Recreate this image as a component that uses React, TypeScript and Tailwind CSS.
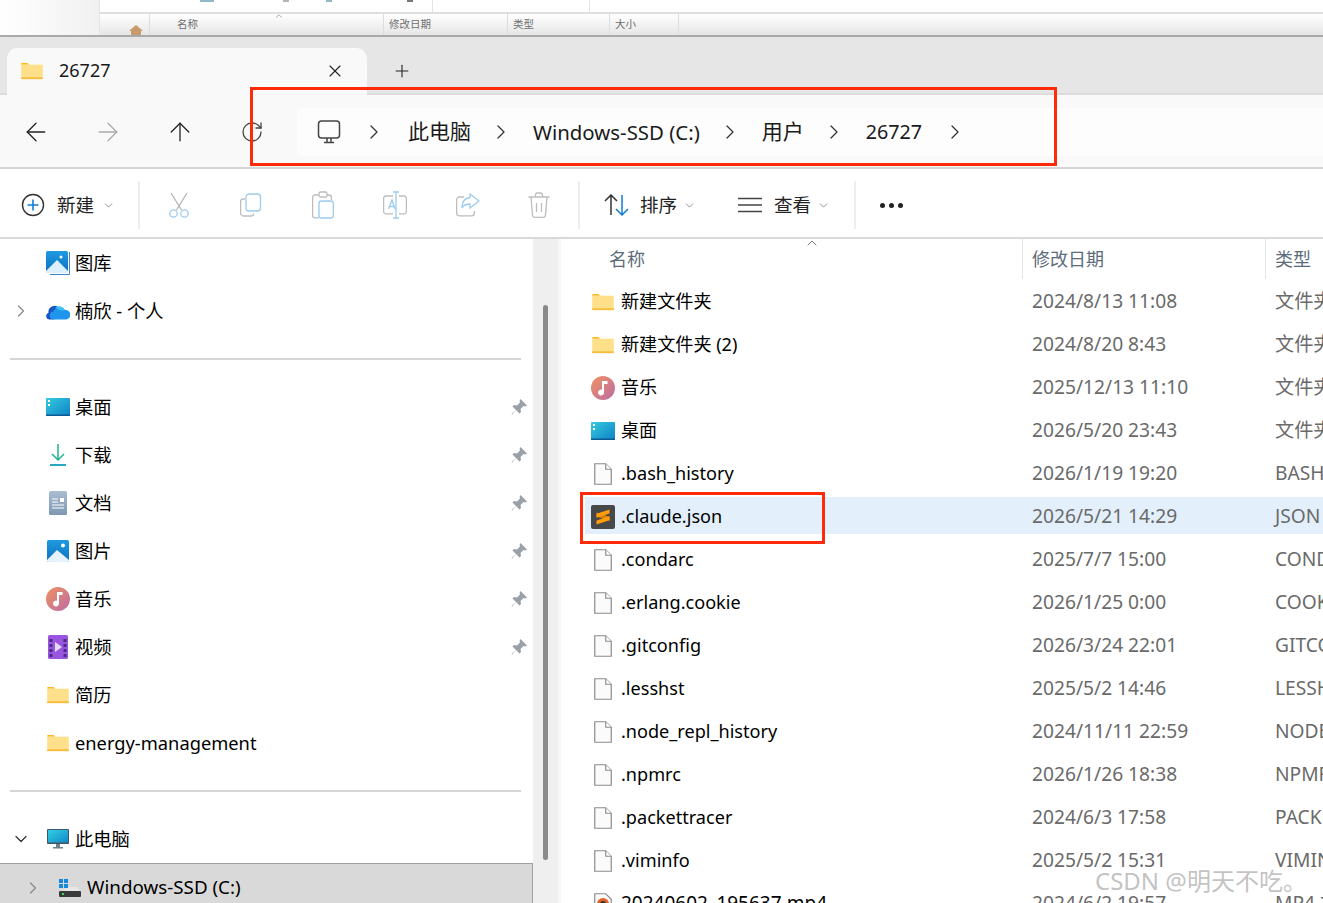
import React from 'react';
import { Plus, X, ChevronRight, ChevronDown, ChevronUp, ArrowLeft, ArrowRight, ArrowUp, RotateCw } from 'lucide-react';

const font = "font-['Noto_Sans','Noto_Sans_CJK_SC',sans-serif]";

function FolderIcon({ className = 'w-[22px] h-[18px]' }: { className?: string }) {
  return (
    <svg viewBox="0 0 24 20" className={className}>
      <path d="M0 2a1 1 0 0 1 1-1h6l2 2h-9z" fill="#fbb81c" />
      <rect x="0" y="3" width="24" height="16" fill="#ffe08a" />
      <rect x="0" y="17" width="24" height="2" fill="#f6bd3a" />
    </svg>
  );
}

function MusicIcon() {
  return (
    <svg viewBox="0 0 24 24" className="w-[24px] h-[24px]">
      <defs>
        <linearGradient id="mus" x1="0" y1="0" x2="1" y2="1">
          <stop offset="0" stopColor="#f09360" />
          <stop offset="1" stopColor="#bc6ba6" />
        </linearGradient>
      </defs>
      <circle cx="12" cy="12" r="12" fill="url(#mus)" />
      <path d="M11 5h5.500v3H13v8.500a3 3 0 1 1-2-2.800z" fill="#fff" />
    </svg>
  );
}

function DesktopIcon() {
  return (
    <svg viewBox="0 0 24 18" className="w-[24px] h-[18px]">
      <defs>
        <linearGradient id="dsk" x1="0" y1="0" x2="1" y2="1">
          <stop offset="0" stopColor="#34cde0" />
          <stop offset="1" stopColor="#0f7fc4" />
        </linearGradient>
      </defs>
      <rect width="24" height="18" rx="1" fill="url(#dsk)" />
      <rect y="16.500" width="24" height="1.500" fill="#0b5a94" />
      <rect x="2" y="2" width="2" height="2" fill="#fff" />
      <rect x="2" y="6" width="2" height="2" fill="#fff" />
    </svg>
  );
}

function FileIcon() {
  return (
    <svg viewBox="0 0 18 22" className="w-[18px] h-[22px]">
      <path d="M.75.75h11l5.500 5.500v15H.75z" fill="#fbfbfb" stroke="#8c8c8c" strokeWidth="1.200" />
      <path d="M11.750.75v5.500h5.500" fill="#fff" stroke="#8c8c8c" strokeWidth="1.200" />
    </svg>
  );
}

function SublimeIcon() {
  return (
    <svg viewBox="0 0 24 24" className="w-[24px] h-[24px]">
      <rect width="24" height="24" rx="2" fill="#47484a" />
      <path d="M5.500 11.500l13 4.200v-4l-13-4.200z" fill="#d98208" />
      <path d="M18.500 4.500 5.500 8.800v4l13-4.300z" fill="#ff9d0a" />
      <path d="M18.500 15.200 5.500 19.500v-4l13-4.200z" fill="#ff9d0a" />
    </svg>
  );
}

function Mp4Icon() {
  return (
    <svg viewBox="0 0 18 22" className="w-[18px] h-[22px]">
      <path d="M.75.75h11l5.500 5.500v15H.75z" fill="#fbfbfb" stroke="#8c8c8c" strokeWidth="1.200" />
      <circle cx="9" cy="11" r="6" fill="#e2622a" />
      <circle cx="9" cy="11" r="3" fill="#333" />
    </svg>
  );
}

function GalleryIcon() {
  return (
    <svg viewBox="0 0 24 24" className="w-[24px] h-[24px]">
      <defs>
        <linearGradient id="gal" x1="0" y1="0" x2="0" y2="1">
          <stop offset="0" stopColor="#1e9be0" />
          <stop offset="1" stopColor="#0c6fc0" />
        </linearGradient>
      </defs>
      <path d="M23 1h1v22a1 1 0 0 1-1 1H4v-1h19z" fill="#3f86cf" />
      <rect width="22" height="22" rx="1.500" fill="url(#gal)" />
      <path d="M0 20 11 9l11 11v1.500a.500.500 0 0 1-.500.500H.500a.500.500 0 0 1-.500-.500z" fill="#dcefff" />
      <circle cx="15" cy="6" r="1.500" fill="#fff" />
    </svg>
  );
}

function CloudIcon() {
  return (
    <svg viewBox="0 0 24 17" className="w-[24px] h-[17px]">
      <path d="M3.500 16.500a3.500 3.500 0 0 1-1-6.800A6 6 0 0 1 13 5L8 16.500z" fill="#1a55c8" />
      <path d="M8 16.500a4 4 0 0 1-.5-8A6.500 6.500 0 0 1 19 7a4.600 4.600 0 0 1 1 9.500z" fill="#1f95ee" />
      <path d="M9.500 4.500A6.500 6.500 0 0 1 19 7c-3 1-6 .5-9.500-2.500z" fill="#3cc2f4" />
    </svg>
  );
}

function DownloadIcon() {
  return (
    <svg viewBox="0 0 16 22" fill="none" className="w-[16px] h-[22px]" stroke="#22b291" strokeWidth="1.500">
      <path d="M8 0v16M2 10l6 6 6-6" />
      <path d="M0 21h16" stroke="#2ba8c4" strokeWidth="2" />
    </svg>
  );
}

function DocsIcon() {
  return (
    <svg viewBox="0 0 18 24" className="w-[18px] h-[24px]">
      <defs>
        <linearGradient id="doc" x1="0" y1="0" x2="0" y2="1">
          <stop offset="0" stopColor="#a9bdd2" />
          <stop offset="1" stopColor="#7e97b3" />
        </linearGradient>
      </defs>
      <rect width="18" height="24" rx="1.500" fill="url(#doc)" />
      <rect x="11" y="7" width="4" height="4" fill="#fff" />
      <path d="M3 8h6M3 11h6M3 14h12M3 17h12" stroke="#fff" />
    </svg>
  );
}

function PicturesIcon() {
  return (
    <svg viewBox="0 0 22 22" className="w-[22px] h-[22px]">
      <defs>
        <linearGradient id="pic" x1="0" y1="0" x2="0" y2="1">
          <stop offset="0" stopColor="#1e9be0" />
          <stop offset="1" stopColor="#0c6fc0" />
        </linearGradient>
      </defs>
      <rect width="22" height="22" rx="1.500" fill="url(#pic)" />
      <path d="M0 20 10 10l12 10v.500a1.500 1.500 0 0 1-1.500 1.500h-19A1.500 1.500 0 0 1 0 20.500z" fill="#e6f3fc" />
      <circle cx="16" cy="5.500" r="2" fill="#fff" />
    </svg>
  );
}

function VideoIcon() {
  return (
    <svg viewBox="0 0 20 24" className="w-[20px] h-[24px]">
      <rect width="20" height="24" rx="1.500" fill="#9a55e0" />
      <path d="M1.500 4h3v3h-3zM1.500 9h3v3h-3zM1.500 14h3v3h-3zM1.500 19h3v3h-3zM15.500 4h3v3h-3zM15.500 9h3v3h-3zM15.500 14h3v3h-3zM15.500 19h3v3h-3z" fill="#4b2a80" />
      <path d="M7 7v10l7-5z" fill="#e6dcf7" />
    </svg>
  );
}

function PcIcon() {
  return (
    <svg viewBox="0 0 22 20" className="w-[22px] h-[20px]">
      <defs>
        <linearGradient id="pc" x1="0" y1="0" x2="1" y2="1">
          <stop offset="0" stopColor="#30d0e4" />
          <stop offset="1" stopColor="#1488c8" />
        </linearGradient>
      </defs>
      <rect width="22" height="15" rx="1" fill="#3f5664" />
      <rect x="1" y="1" width="20" height="12.500" fill="url(#pc)" />
      <rect x="9" y="15" width="4" height="3" fill="#6d7f8b" />
      <rect x="6" y="18" width="10" height="1.500" fill="#6d7f8b" />
    </svg>
  );
}

function DriveIcon() {
  return (
    <svg viewBox="0 0 22 18" className="w-[22px] h-[18px]">
      <path d="M3 11 11 8h7l4 6z" fill="#e7e7e7" />
      <rect y="12" width="22" height="6" rx="1" fill="#3b3b3b" />
      <rect x="3" y="14" width="2" height="2" fill="#35e04a" />
      <path d="M0 0h4v4H0zM5 0h4v4H5zM0 5h4v4H0zM5 5h4v4H5z" fill="#1689dc" />
    </svg>
  );
}

function PinIcon() {
  return (
    <svg viewBox="0 0 16 16" className="w-[16px] h-[16px]" fill="#98a1a8">
      <path d="M9.500 0 16 6.500l-2 1-1.500-.500-3 3 .5 3-1.500 1.500L5 11 1 15.500.500 15 5 11 1.500 7.500 3 6l3 .5 3-3-.5-1.500z" />
    </svg>
  );
}

function ScissorsIcon() {
  return (
    <svg viewBox="0 0 22 26" fill="none" className="w-[22px] h-[26px]" strokeWidth="1.300">
      <path d="M3 1l10.500 17M19 1 8.500 18" stroke="#b4b4b4" />
      <circle cx="5.500" cy="21.500" r="3.700" stroke="#9ccbf0" />
      <circle cx="16.500" cy="21.500" r="3.700" stroke="#9ccbf0" />
    </svg>
  );
}

function CopyIcon() {
  return (
    <svg viewBox="0 0 22 24" fill="none" className="w-[22px] h-[24px]" strokeWidth="1.300">
      <path d="M5 6H3a2.400 2.400 0 0 0-2.400 2.400V20A3 3 0 0 0 3.600 23h7.800a2.400 2.400 0 0 0 2.400-2.400" stroke="#bdbdbd" />
      <rect x="6" y="1" width="14.500" height="17" rx="3" stroke="#9ccbf0" />
    </svg>
  );
}

function PasteIcon() {
  return (
    <svg viewBox="0 0 22 28" fill="none" className="w-[22px] h-[28px]" strokeWidth="1.300">
      <path d="M7 4H3a2.400 2.400 0 0 0-2.400 2.400v18A2.400 2.400 0 0 0 3 26.800h4" stroke="#bdbdbd" />
      <path d="M15 4h2a2.400 2.400 0 0 1 2.400 2.400V9" stroke="#bdbdbd" />
      <rect x="7" y="1" width="8" height="5" rx="1.500" stroke="#bdbdbd" />
      <rect x="7" y="10" width="14.300" height="17" rx="2.500" stroke="#9ccbf0" />
    </svg>
  );
}

function RenameIcon() {
  return (
    <svg viewBox="0 0 24 28" fill="none" className="w-[24px] h-[28px]" strokeWidth="1.300">
      <path d="M10 5H3a2.400 2.400 0 0 0-2.400 2.400v13A2.400 2.400 0 0 0 3 22.800h7M16 5h5a2.400 2.400 0 0 1 2.400 2.400v13a2.400 2.400 0 0 1-2.400 2.400h-5" stroke="#bdbdbd" />
      <path d="M10 1h6M13 1v26M10 27h6M5.500 18 9 9l3 9M6.500 15.500h5" stroke="#9ccbf0" />
    </svg>
  );
}

function ShareIcon() {
  return (
    <svg viewBox="0 0 24 24" fill="none" className="w-[24px] h-[24px]" strokeWidth="1.300">
      <path d="M8 4H3.500A2.900 2.900 0 0 0 .600 6.900v13a2.900 2.900 0 0 0 2.900 2.900h12a2.900 2.900 0 0 0 2.900-2.900V18" stroke="#bdbdbd" />
      <path d="M14 1l9 7-9 7v-4c-4 0-6.500 1-8 4 0-6 3-10 8-10.500z" stroke="#9ccbf0" />
    </svg>
  );
}

function TrashIcon() {
  return (
    <svg viewBox="0 0 22 26" fill="none" className="w-[22px] h-[26px]" strokeWidth="1.300" stroke="#bdbdbd">
      <path d="M.500 5h21M7.500 5V3a2 2 0 0 1 2-2h3a2 2 0 0 1 2 2v2" />
      <path d="M3 5l1.500 18a2.500 2.500 0 0 0 2.500 2.300h8a2.500 2.500 0 0 0 2.500-2.300L19 5" />
      <path d="M8.500 11v9M13.500 11v9" />
    </svg>
  );
}

function SortIcon() {
  return (
    <svg viewBox="0 0 26 22" fill="none" className="w-[26px] h-[22px]" strokeWidth="1.500">
      <path d="M7 21V1M1 7l6-6 6 6" stroke="#333" />
      <path d="M18 1v20M12 15l6 6 6-6" stroke="#0f7fd6" />
    </svg>
  );
}

function ViewIcon() {
  return (
    <svg viewBox="0 0 24 16" className="w-[24px] h-[16px]" stroke="#444" strokeWidth="1.300">
      <path d="M0 1.500h24M0 8h24M0 14.500h24" />
    </svg>
  );
}

function NewIcon() {
  return (
    <svg viewBox="0 0 24 24" fill="none" className="w-[24px] h-[24px]">
      <circle cx="12" cy="12" r="10.500" stroke="#333" strokeWidth="1.400" />
      <path d="M12 6.500v11M6.500 12h11" stroke="#0f7fd6" strokeWidth="1.600" />
    </svg>
  );
}

function MonitorIcon() {
  return (
    <svg viewBox="0 0 24 24" fill="none" className="w-[24px] h-[24px]" stroke="#444" strokeWidth="1.500">
      <rect x="1.500" y="1" width="21" height="17" rx="3" />
      <path d="M10 18v4M14 18v4M7 22.500h10" />
    </svg>
  );
}

function Sep() {
  return <div className="w-[2px] h-[48px] bg-[#eeeeee] shrink-0" />;
}

function Crumb() {
  return <ChevronRight size={24} strokeWidth={1.3} className="shrink-0 text-[#333]" />;
}

function NavItem({ icon, label, chev, pin }: { icon: React.ReactNode; label: string; chev?: 'right' | 'down'; pin?: boolean }) {
  return (
    <div className="h-[48px] shrink-0 flex items-center pr-[6px]">
      <div className="w-[45px] flex items-center justify-center pr-[3px] shrink-0">
        {chev === 'right' && <ChevronRight size={20} strokeWidth={1.5} className="text-[#8a8a8a]" />}
        {chev === 'down' && <ChevronDown size={20} strokeWidth={1.5} className="text-[#333]" />}
      </div>
      <div className="w-[25px] flex justify-center shrink-0">{icon}</div>
      <span className="ml-[5px] text-[18.3px] text-black">{label}</span>
      {pin && <div className="ml-auto"><PinIcon /></div>}
    </div>
  );
}

function Divider() {
  return (
    <div className="h-[48px] shrink-0 flex items-center pl-[10px] pr-[12px]">
      <div className="w-full h-[2px] bg-[#d5d5d5]" />
    </div>
  );
}

const rows = [
  { name: '新建文件夹', date: '2024/8/13 11:08', type: '文件夹', icon: <FolderIcon /> },
  { name: '新建文件夹 (2)', date: '2024/8/20 8:43', type: '文件夹', icon: <FolderIcon /> },
  { name: '音乐', date: '2025/12/13 11:10', type: '文件夹', icon: <MusicIcon /> },
  { name: '桌面', date: '2026/5/20 23:43', type: '文件夹', icon: <DesktopIcon /> },
  { name: '.bash_history', date: '2026/1/19 19:20', type: 'BASH_HISTORY', icon: <FileIcon /> },
  { name: '.claude.json', date: '2026/5/21 14:29', type: 'JSON 文件', icon: <SublimeIcon />, selected: true },
  { name: '.condarc', date: '2025/7/7 15:00', type: 'CONDARC', icon: <FileIcon /> },
  { name: '.erlang.cookie', date: '2026/1/25 0:00', type: 'COOKIE', icon: <FileIcon /> },
  { name: '.gitconfig', date: '2026/3/24 22:01', type: 'GITCONFIG', icon: <FileIcon /> },
  { name: '.lesshst', date: '2025/5/2 14:46', type: 'LESSHST', icon: <FileIcon /> },
  { name: '.node_repl_history', date: '2024/11/11 22:59', type: 'NODE_REPL', icon: <FileIcon /> },
  { name: '.npmrc', date: '2026/1/26 18:38', type: 'NPMRC', icon: <FileIcon /> },
  { name: '.packettracer', date: '2024/6/3 17:58', type: 'PACKETTRACER', icon: <FileIcon /> },
  { name: '.viminfo', date: '2025/5/2 15:31', type: 'VIMINFO', icon: <FileIcon /> },
  { name: '20240602_195637.mp4', date: '2024/6/2 19:57', type: 'MP4 文件', icon: <Mp4Icon />, wide: true },
];

export default function App() {
  return (
    <div className={`relative w-[1323px] h-[903px] overflow-hidden bg-white flex flex-col ${font}`}>
      {/* window behind */}
      <div className="h-[37px] shrink-0 flex bg-white border-b-2 border-[#a9a9a9]">
        <div className="w-[99px] shrink-0 bg-gradient-to-r from-white to-[#f1f1f1]" />
        <div className="flex-1 flex flex-col border-l border-[#e4e4e4]">
          <div className="h-[14px] shrink-0 border-b-2 border-[#dedede] relative">
            <span className="absolute left-[100px] top-0 w-[14px] h-[2px] bg-[#8fb8c8]" />
            <span className="absolute left-[183px] top-0 w-[6px] h-[2px] bg-[#b5b5b5]" />
            <span className="absolute left-[226px] top-0 w-[6px] h-[2px] bg-[#8fb8c8]" />
            <span className="absolute left-[307px] top-0 w-[6px] h-[2px] bg-[#777777]" />
            <span className="absolute left-[332px] top-0 w-px h-[12px] bg-[#e4e4e4]" />
            <span className="absolute left-[489px] top-0 w-px h-[12px] bg-[#e4e4e4]" />
          </div>
          <div className="flex-1 flex items-center text-[10.5px] text-[#6e6e6e] bg-gradient-to-b from-white to-[#e6e6e6] relative">
            <ChevronUp size={10} strokeWidth={1.5} className="absolute left-[174px] top-[-3px] text-[#777]" />
            <div className="w-[50px] h-full border-r border-[#dddddd] flex items-end pl-[29px]">
              <svg viewBox="0 0 14 10" className="w-[14px] h-[10px]"><path d="M7 0 0 6h2v4h10V6h2z" fill="#c99a6b" /></svg>
            </div>
            <div className="w-[234px] h-full border-r border-[#dddddd] pl-[27px] flex items-center">名称</div>
            <div className="w-[124px] h-full border-r border-[#dddddd] pl-[5px] flex items-center">修改日期</div>
            <div className="w-[102px] h-full border-r border-[#dddddd] pl-[5px] flex items-center">类型</div>
            <div className="w-[69px] h-full border-r border-[#dddddd] pl-[5px] flex items-center">大小</div>
          </div>
        </div>
      </div>

      {/* tab strip */}
      <div className="h-[58px] shrink-0 bg-[#e6e6e6] flex items-end pl-[7px] border-b-2 border-[#dcdcdc]">
        <div className="w-[360px] h-[47px] bg-[#f9f9f9] rounded-t-[10px] flex items-center pl-[14px] pr-[22px] pb-[2px] mb-[-2px]">
          <FolderIcon />
          <span className="ml-[16px] text-[18px] text-[#1a1a1a]">26727</span>
          <X size={20} strokeWidth={1.3} className="ml-auto text-[#222]" />
        </div>
        <div className="h-[47px] flex items-center pl-[25px] pt-[2px]">
          <Plus size={20} strokeWidth={1.3} className="text-[#222]" />
        </div>
      </div>

      {/* address row */}
      <div className="h-[74px] shrink-0 bg-[#f9f9f9] border-b-2 border-[#d5d5d5] flex items-center pl-[21px] pt-[2px]">
        <ArrowLeft size={30} strokeWidth={1.05} className="text-[#222]" />
        <ArrowRight size={30} strokeWidth={1.05} className="ml-[42px] text-[#aaaaaa]" />
        <ArrowUp size={30} strokeWidth={1.05} className="ml-[42px] text-[#222]" />
        <RotateCw size={24} strokeWidth={1.3} className="ml-[45px] text-[#444]" />
        <div className="ml-[33px] flex-1 h-[48px] bg-[#fdfdfd] rounded-l-[6px] flex items-center pl-[20px] text-[#1a1a1a] whitespace-nowrap">
          <MonitorIcon />
          <div className="ml-[21px]"><Crumb /></div>
          <span className="ml-[22px] text-[21px]">此电脑</span>
          <div className="ml-[18px]"><Crumb /></div>
          <span className="ml-[20px] text-[20.4px]">Windows-SSD (C:)</span>
          <div className="ml-[18px]"><Crumb /></div>
          <span className="ml-[20px] text-[21px]">用户</span>
          <div className="ml-[18px]"><Crumb /></div>
          <span className="ml-[20px] text-[19.7px]">26727</span>
          <div className="ml-[21px]"><Crumb /></div>
        </div>
      </div>

      {/* command bar */}
      <div className="h-[70px] shrink-0 bg-white border-b-2 border-[#d9d9d9] flex items-center pl-[21px] pt-[4px] text-[18.5px] text-[#222]">
        <NewIcon />
        <span className="ml-[12px]">新建</span>
        <ChevronDown size={13} strokeWidth={1.3} className="ml-[8px] text-[#666]" />
        <div className="ml-[23px]"><Sep /></div>
        <div className="ml-[28px]"><ScissorsIcon /></div>
        <div className="ml-[50px]"><CopyIcon /></div>
        <div className="ml-[50px]"><PasteIcon /></div>
        <div className="ml-[49px]"><RenameIcon /></div>
        <div className="ml-[49px]"><ShareIcon /></div>
        <div className="ml-[48px]"><TrashIcon /></div>
        <div className="ml-[28px]"><Sep /></div>
        <div className="ml-[24px]"><SortIcon /></div>
        <span className="ml-[10px]">排序</span>
        <ChevronDown size={13} strokeWidth={1.3} className="ml-[6px] text-[#666]" />
        <div className="ml-[42px]"><ViewIcon /></div>
        <span className="ml-[12px]">查看</span>
        <ChevronDown size={13} strokeWidth={1.3} className="ml-[6px] text-[#666]" />
        <div className="ml-[24px]"><Sep /></div>
        <div className="ml-[24px] flex gap-[4px]">
          <span className="w-[5px] h-[5px] rounded-full bg-[#222]" />
          <span className="w-[5px] h-[5px] rounded-full bg-[#222]" />
          <span className="w-[5px] h-[5px] rounded-full bg-[#222]" />
        </div>
      </div>

      {/* body */}
      <div className="flex-1 min-h-0 flex">
        <div className="w-[533px] shrink-0 flex flex-col overflow-hidden">
          <NavItem icon={<GalleryIcon />} label="图库" />
          <NavItem icon={<CloudIcon />} label="楠欣 - 个人" chev="right" />
          <Divider />
          <NavItem icon={<DesktopIcon />} label="桌面" pin />
          <NavItem icon={<DownloadIcon />} label="下载" pin />
          <NavItem icon={<DocsIcon />} label="文档" pin />
          <NavItem icon={<PicturesIcon />} label="图片" pin />
          <NavItem icon={<MusicIcon />} label="音乐" pin />
          <NavItem icon={<VideoIcon />} label="视频" pin />
          <NavItem icon={<FolderIcon />} label="简历" />
          <NavItem icon={<FolderIcon />} label="energy-management" />
          <Divider />
          <NavItem icon={<PcIcon />} label="此电脑" chev="down" />
          <div className="h-[48px] shrink-0 bg-[#d9d9d9] border-t border-r border-[#a0a0a0] flex items-center">
            <div className="w-[59px] flex justify-start pl-[23px]">
              <ChevronRight size={20} strokeWidth={1.5} className="text-[#8a8a8a]" />
            </div>
            <DriveIcon />
            <span className="ml-[6px] text-[18.8px] text-black">Windows-SSD (C:)</span>
          </div>
        </div>

        {/* scrollbar */}
        <div className="w-[25px] shrink-0 bg-[#efefef] pt-[66px] pl-[10px]">
          <div className="w-[5px] h-[555px] rounded-full bg-[#8a8a8a]" />
        </div>
        <div className="w-[3px] shrink-0 bg-[#f6f6f6]" />

        {/* file list */}
        <div className="flex-1 min-w-0 flex flex-col">
          <div className="h-[40px] shrink-0 flex text-[18px] text-[#5c6b7a] relative">
            <ChevronUp size={16} strokeWidth={1.2} className="absolute left-[243px] top-[-4px] text-[#555]" />
            <div className="w-[462px] shrink-0 pl-[48px] flex items-center border-r border-[#e5e5e5]">名称</div>
            <div className="w-[243px] shrink-0 pl-[9px] flex items-center border-r border-[#e5e5e5]">修改日期</div>
            <div className="pl-[9px] flex items-center">类型</div>
          </div>
          <div className="pt-[3px] pl-[24px] flex flex-col">
            {rows.map((r) => (
              <div key={r.name} className={`h-[37px] mb-[6px] pt-[2px] shrink-0 flex items-center whitespace-nowrap ${r.selected ? 'bg-[#e3f0fb]' : ''}`}>
                <div className="w-[36px] pl-[6px] pr-[6px] flex justify-center shrink-0">{r.icon}</div>
                <span className={`w-[411px] shrink-0 text-black ${r.wide ? 'text-[19px]' : 'text-[18.1px]'}`}>{r.name}</span>
                <span className="w-[243px] shrink-0 text-[19.2px] text-[#6a6a6a]">{r.date}</span>
                <span className="text-[19.2px] text-[#6a6a6a]">{r.type}</span>
              </div>
            ))}
          </div>
        </div>
      </div>

      {/* screenshot annotations */}
      <div className="absolute left-[250px] top-[87px] w-[807px] h-[79px] border-[3px] border-[#ff2a0a]" />
      <div className="absolute left-[580px] top-[492px] w-[245px] h-[52px] border-[3px] border-[#ff2a0a]" />
      <div className="absolute left-[1095px] top-[865px] text-[24px] leading-[32px] text-[#a8a8a8]/70 whitespace-nowrap">CSDN @明天不吃。</div>
    </div>
  );
}
